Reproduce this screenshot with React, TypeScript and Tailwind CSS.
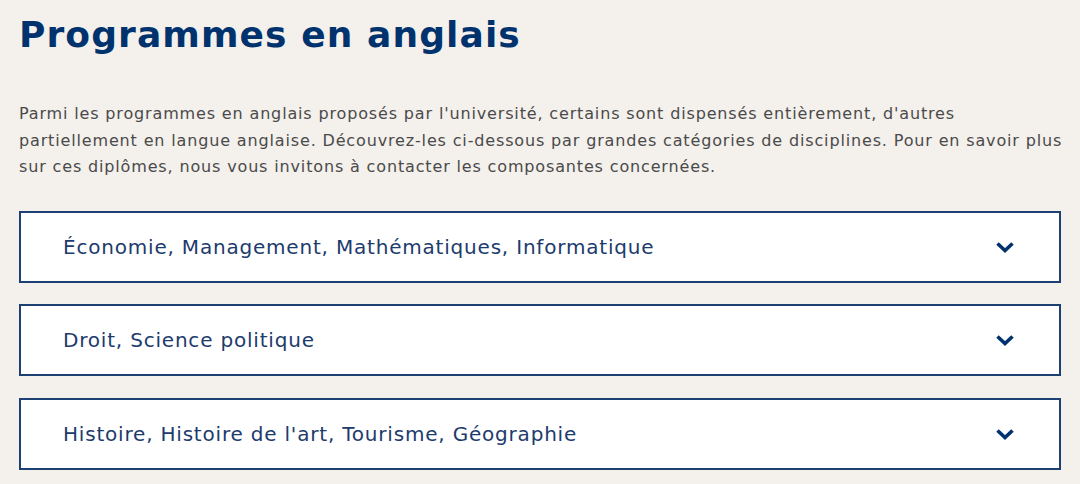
const categories = [
  'Économie, Management, Mathématiques, Informatique',
  'Droit, Science politique',
  "Histoire, Histoire de l'art, Tourisme, Géographie",
];

const intro = [
  "Parmi les programmes en anglais proposés par l'université, certains sont dispensés entièrement, d'autres",
  'partiellement en langue anglaise. Découvrez-les ci-dessous par grandes catégories de disciplines. Pour en savoir plus',
  'sur ces diplômes, nous vous invitons à contacter les composantes concernées.',
];

function Chevron() {
  return (
    <svg width="20" height="12" viewBox="0 0 20 12" fill="none" className="shrink-0">
      <polyline points="2.5,2.5 10,9.5 17.5,2.5" stroke="#00336e" strokeWidth="3.6" strokeLinejoin="miter" />
    </svg>
  );
}

export default function App() {
  return (
    <div className="min-h-screen bg-[#f4f0ec] px-[19px] pt-[12px] font-['DejaVu_Sans',sans-serif]">
      <h1 className="text-[36px] leading-[46px] font-bold tracking-[1.1px] text-[#00336e]">
        Programmes en anglais
      </h1>

      <p className="mt-[43px] text-[16px] leading-[26.5px] tracking-[0.85px] text-[#4a4a4a]">
        {intro.map((line) => (
          <span key={line} className="block whitespace-nowrap">
            {line}
          </span>
        ))}
      </p>

      <div className="mt-[30px] flex flex-col gap-[21.5px]">
        {categories.map((c) => (
          <button
            key={c}
            className="flex h-[72px] w-full items-center justify-between border-2 border-[#1c3f74] bg-white pl-[42px] pr-[44px] text-left"
          >
            <span className="text-[20px] tracking-[0.8px] text-[#1d3b6c]">{c}</span>
            <Chevron />
          </button>
        ))}
      </div>
    </div>
  );
}
